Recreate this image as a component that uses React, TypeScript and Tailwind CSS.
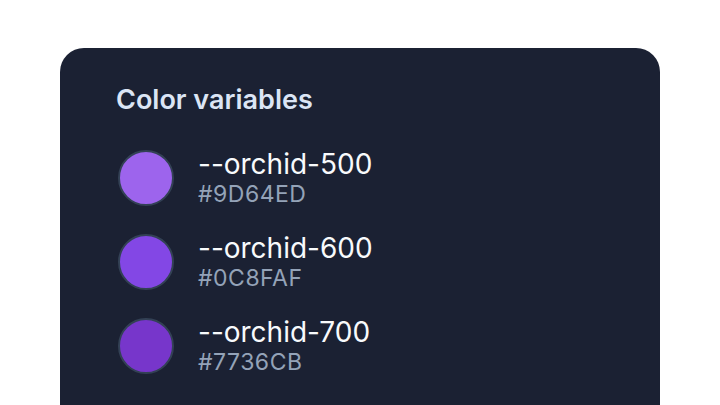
import React from 'react';

interface ColorVar {
  name: string
  hex: string
  swatch: string
}

const colors: ColorVar[] = [
  { name: '--orchid-500', hex: '#9D64ED', swatch: 'bg-[#9d64ed]' },
  { name: '--orchid-600', hex: '#0C8FAF', swatch: 'bg-[#8347e5]' },
  { name: '--orchid-700', hex: '#7736CB', swatch: 'bg-[#7736cb]' },
]

function ColorRow({ color }: { color: ColorVar }) {
  return (
    <div className="flex items-center gap-6">
      <div className={`w-14 h-14 shrink-0 rounded-full border-2 border-[#334155] ${color.swatch}`} />
      <div className="flex flex-col">
        <span className="text-[28px] leading-8 text-[#f8fafc]">{color.name}</span>
        <span className="text-[23px] leading-7 tracking-[0.5px] text-[#94a3b8]">{color.hex}</span>
      </div>
    </div>
  )
}

export default function App() {
  return (
    <div
      className="w-[720px] h-[405px] overflow-hidden bg-white pt-12"
      style={{ fontFamily: 'Inter, "Noto Sans", sans-serif' }}
    >
      <div className="mx-auto w-[600px] min-h-[420px] rounded-3xl bg-[#1b2133] pl-14 pt-9">
        <h2 className="text-[27px] leading-8 font-semibold text-[#dbe5f5] mb-8">Color variables</h2>
        <div className="ml-0.5 flex flex-col gap-6">
          {colors.map((c) => (
            <ColorRow key={c.name} color={c} />
          ))}
        </div>
      </div>
    </div>
  )
}
